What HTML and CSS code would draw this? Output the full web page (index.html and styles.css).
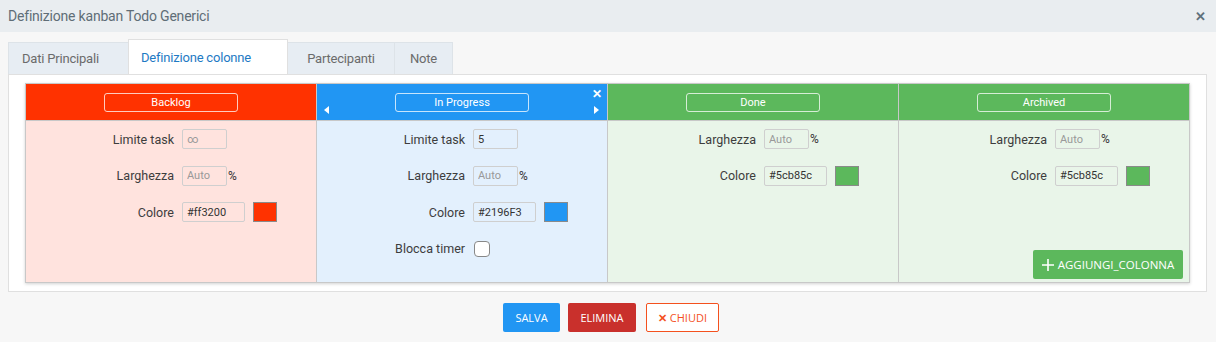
FILE: index.html
```html
<!DOCTYPE html>
<html lang="it">
<head>
    <meta charset="UTF-8">
    <title>Definizione kanban</title>
    <link rel="stylesheet" href="styles.css">
</head>
<body>
<div class="modal">
    <div class="modal-header">
        <span class="modal-title">Definizione kanban Todo Generici</span>
        <span class="modal-close">&#x2715;</span>
    </div>

    <div class="modal-body">
        <ul class="tabs">
            <li class="tab tab-dati">Dati Principali</li>
            <li class="tab active">Definizione colonne</li>
            <li class="tab tab-part">Partecipanti</li>
            <li class="tab tab-note">Note</li>
        </ul>

        <div class="tab-panel">
            <div class="board">
                <!-- Backlog -->
                <div class="column col-red">
                    <div class="column-head">
                        <span class="head-name">Backlog</span>
                    </div>
                    <div class="column-body">
                        <div class="form-grid">
                            <label>Limite task</label>
                            <div class="field"><input type="text" class="inp small" placeholder="&#8734;"></div>
                            <label>Larghezza</label>
                            <div class="field"><input type="text" class="inp small" placeholder="Auto"><span class="suffix">%</span></div>
                            <label>Colore</label>
                            <div class="field"><input type="text" class="inp wide" value="#ff3200"><span class="swatch" style="background:#ff3200"></span></div>
                        </div>
                    </div>
                </div>

                <!-- In Progress -->
                <div class="column col-blue">
                    <div class="column-head">
                        <span class="arrow arrow-left"></span>
                        <span class="head-name">In Progress</span>
                        <span class="head-close">&#x2715;</span>
                        <span class="arrow arrow-right"></span>
                    </div>
                    <div class="column-body">
                        <div class="form-grid">
                            <label>Limite task</label>
                            <div class="field"><input type="text" class="inp small" value="5"></div>
                            <label>Larghezza</label>
                            <div class="field"><input type="text" class="inp small" placeholder="Auto"><span class="suffix">%</span></div>
                            <label>Colore</label>
                            <div class="field"><input type="text" class="inp wide" value="#2196F3"><span class="swatch" style="background:#2196f3"></span></div>
                            <label>Blocca timer</label>
                            <div class="field"><span class="checkbox"></span></div>
                        </div>
                    </div>
                </div>

                <!-- Done -->
                <div class="column col-green">
                    <div class="column-head">
                        <span class="head-name">Done</span>
                    </div>
                    <div class="column-body">
                        <div class="form-grid">
                            <label>Larghezza</label>
                            <div class="field"><input type="text" class="inp small" placeholder="Auto"><span class="suffix">%</span></div>
                            <label>Colore</label>
                            <div class="field"><input type="text" class="inp wide" value="#5cb85c"><span class="swatch" style="background:#5cb85c"></span></div>
                        </div>
                    </div>
                </div>

                <!-- Archived -->
                <div class="column col-green">
                    <div class="column-head">
                        <span class="head-name">Archived</span>
                    </div>
                    <div class="column-body">
                        <div class="form-grid">
                            <label>Larghezza</label>
                            <div class="field"><input type="text" class="inp small" placeholder="Auto"><span class="suffix">%</span></div>
                            <label>Colore</label>
                            <div class="field"><input type="text" class="inp wide" value="#5cb85c"><span class="swatch" style="background:#5cb85c"></span></div>
                        </div>
                        <button class="btn-add">
                            <svg width="12" height="12" viewBox="0 0 12 12"><path d="M6 0v12M0 6h12" stroke="#fff" stroke-width="1.6"/></svg>
                            AGGIUNGI_COLONNA
                        </button>
                    </div>
                </div>
            </div>
        </div>
    </div>

    <div class="modal-footer">
        <button class="btn btn-save">SALVA</button>
        <button class="btn btn-delete">ELIMINA</button>
        <button class="btn btn-close"><span class="x">&#x2715;</span> CHIUDI</button>
    </div>
</div>
</body>
</html>
```

FILE: styles.css
```css
/* General */
body {
    margin: 0;
    padding: 0;
    background-color: #f7f7f7;
    font-family: Roboto, 'Liberation Sans', Arial, sans-serif;
    color: #333;
}

.modal {
    width: 1216px;
    height: 342px;
    background-color: #f7f7f7;
}

/* Header */
.modal-header {
    height: 32px;
    padding: 0 10px 0 8px;
    display: flex;
    align-items: center;
    justify-content: space-between;
    background-color: #e9edf0;
}

.modal-title {
    font-size: 14px;
    color: #5f6d77;
    letter-spacing: -0.2px;
}

.modal-close {
    font-size: 13px;
    font-weight: bold;
    color: #5f707b;
}

/* Tabs */
.modal-body {
    padding: 7px 9px 0 8px;
}

.tabs {
    list-style: none;
    margin: 0;
    padding: 0;
    display: flex;
    align-items: flex-end;
}

.tab {
    height: 32px;
    line-height: 31px;
    font-size: 13px;
    color: #6b6b6b;
    background-color: #e7edf3;
    border: 1px solid #dde3e8;
    border-bottom: none;
    margin-right: -1px;
    letter-spacing: -0.2px;
    box-sizing: border-box;
}

.tab-dati {
    width: 121px;
    padding-left: 13px;
}

.tab-part {
    width: 108px;
    text-align: center;
}

.tab-note {
    width: 59px;
    text-align: center;
}

.tab.active {
    width: 160px;
    height: 35px;
    line-height: 35px;
    padding-left: 12px;
    background-color: #fff;
    color: #1e7ac4;
    position: relative;
    z-index: 1;
    border-color: #e0e0e0;
}

/* Tab panel */
.tab-panel {
    background-color: #fff;
    border: 1px solid #e0e0e0;
    padding: 8px 16px 8px 16px;
}

.board {
    display: flex;
    height: 198px;
    border: 1px solid #c8c8c8;
    box-shadow: 0 1px 3px rgba(0, 0, 0, 0.18);
}

.column {
    flex: 1 1 0;
    display: flex;
    flex-direction: column;
    border-right: 1px solid #c8c8c8;
}

.column:last-child {
    border-right: none;
}

.column-head {
    height: 36px;
    display: flex;
    align-items: center;
    justify-content: center;
    position: relative;
    border-bottom: 1px solid #c8c8c8;
}

.head-name {
    width: 132px;
    height: 17px;
    line-height: 17px;
    border: 1px solid rgba(255, 255, 255, 0.75);
    border-radius: 3px;
    text-align: center;
    font-size: 11px;
    color: #fff;
}

.head-close {
    position: absolute;
    top: 3px;
    right: 5px;
    font-size: 12px;
    font-weight: bold;
    color: #fff;
}

.arrow {
    position: absolute;
    bottom: 6px;
    width: 0;
    height: 0;
    border-top: 4px solid transparent;
    border-bottom: 4px solid transparent;
}

.arrow-left {
    left: 7px;
    border-right: 5px solid #fff;
}

.arrow-right {
    right: 8px;
    border-left: 5px solid #fff;
}

.col-red .column-head { background-color: #ff3200; }
.col-red .column-body { background-color: #ffe3de; }
.col-blue .column-head { background-color: #2196f3; }
.col-blue .column-body { background-color: #e3f0fd; }
.col-green .column-head { background-color: #5cb85c; }
.col-green .column-body { background-color: #e9f5e9; }

.column-body {
    flex: 1;
    display: flex;
    flex-direction: column;
    padding: 8px 0 3px 0;
}

/* Form rows */
.form-grid {
    display: grid;
    grid-template-columns: 148px auto;
    grid-auto-rows: 20px;
    column-gap: 8px;
    row-gap: 16.6px;
    align-items: center;
}

.form-grid label {
    text-align: right;
    font-size: 12.5px;
    color: #3d3d3d;
}

.field {
    display: flex;
    align-items: center;
}

.inp {
    height: 20px;
    box-sizing: border-box;
    border: 1px solid #cfcfcf;
    border-radius: 2px;
    background: transparent;
    padding: 0 4px;
    font-family: Roboto, 'Liberation Sans', Arial, sans-serif;
    font-size: 11px;
    color: #333;
    outline: none;
}

.inp::placeholder {
    color: #999;
}

.inp.small {
    width: 45px;
}

.inp.wide {
    width: 63px;
}

.suffix {
    font-size: 12px;
    margin-left: 1px;
}

.swatch {
    width: 22px;
    height: 18px;
    margin-left: 8px;
    border: 1px solid #8a8a8a;
}

.checkbox {
    width: 14px;
    height: 14px;
    margin-left: 1px;
    background-color: #fff;
    border: 1px solid #888;
    border-radius: 4px;
}

.btn-add {
    margin-top: auto;
    margin-right: 6px;
    align-self: flex-end;
    width: 150px;
    height: 29px;
    border: none;
    border-radius: 2px;
    background-color: #5cb85c;
    color: #fff;
    font-family: 'Open Sans', Roboto, sans-serif;
    font-size: 11.5px;
    display: flex;
    align-items: center;
    justify-content: center;
    gap: 4px;
    padding: 0;
}

/* Footer */
.modal-footer {
    display: flex;
    justify-content: center;
    gap: 8px;
    margin-top: 11px;
    padding-left: 6px;
}

.btn {
    height: 29px;
    border-radius: 2px;
    font-family: 'Open Sans', Roboto, sans-serif;
    font-size: 11px;
    padding: 0;
    border: 1px solid transparent;
    color: #fff;
    white-space: nowrap;
}

.btn-save {
    width: 57px;
    background-color: #2196f3;
}

.btn-delete {
    width: 68px;
    background-color: #c9302c;
}

.btn-close {
    width: 73px;
    margin-left: 2px;
    background-color: #fff;
    border-color: #f4511e;
    color: #f4511e;
}

.btn-close .x {
    font-weight: bold;
}
```
